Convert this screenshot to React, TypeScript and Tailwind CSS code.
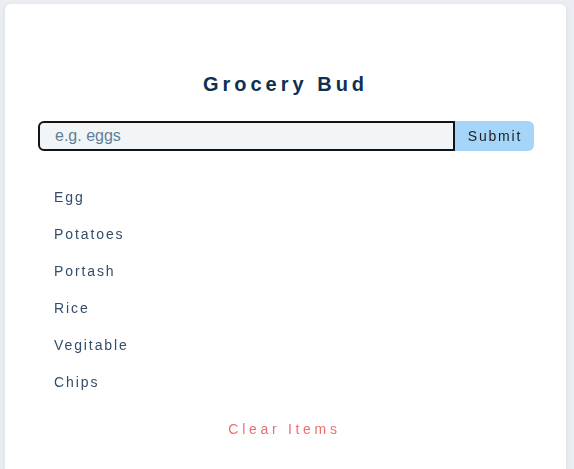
import React from "react";

const items = ["Egg", "Potatoes", "Portash", "Rice", "Vegitable", "Chips"];

export default function App() {
  return (
    <div
      className="min-h-[469px] w-full bg-[#eaeef2] pt-[4px] pl-[5px] pr-[8px]"
      style={{ fontFamily: '"Liberation Sans", Arial, sans-serif' }}
    >
      <div className="h-[465px] w-[561px] rounded-t-[6px] bg-white px-[33px] pt-[67px] shadow-[0_2px_6px_rgba(0,0,0,0.08)]">
        <h3 className="text-center text-[20px] font-bold leading-[26px] tracking-[4px] text-[#0f3050]">
          Grocery Bud
        </h3>
        <form className="mt-[24px] flex h-[30px] w-[496px]" onSubmit={(e) => e.preventDefault()}>
          <input
            autoFocus
            placeholder="e.g. eggs"
            className="h-[30px] flex-1 rounded-l-[6px] border-2 border-[#141414] bg-[#f1f5f8] pl-[15px] text-[16px] text-[#102a42] outline-none placeholder:text-[#617d98]"
          />
          <button
            type="submit"
            className="h-[30px] w-[79px] rounded-r-[6px] bg-[#a5d5f8] pl-[1px] text-[14px] tracking-[1.8px] text-[#222]"
          >
            Submit
          </button>
        </form>
        <div className="mt-[28px] pl-[16px]">
          {items.map((it) => (
            <div
              key={it}
              className="flex h-[37px] items-center text-[14px] tracking-[1.9px] text-[#324d67]"
            >
              {it}
            </div>
          ))}
        </div>
        <div className="mt-[18px] flex justify-center">
          <button className="pl-0 pr-[2px] text-[14px] leading-[20px] tracking-[3.7px] text-[#ee6e6e]">
            Clear Items
          </button>
        </div>
      </div>
    </div>
  );
}
